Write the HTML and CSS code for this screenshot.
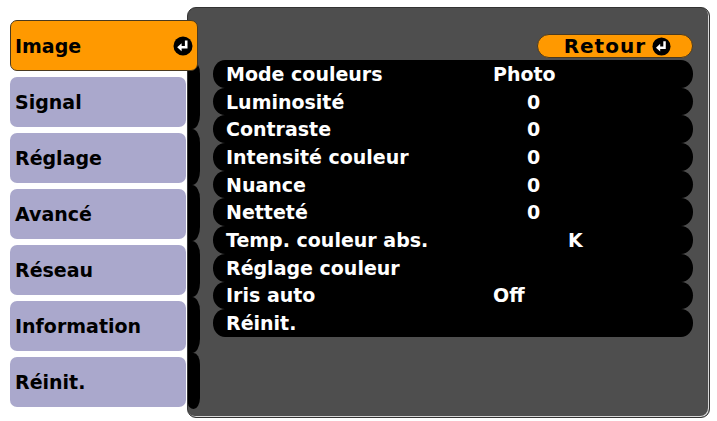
FILE: index.html
```html
<!DOCTYPE html>
<html lang="fr">
<head>
  <meta charset="UTF-8" />
  <meta name="viewport" content="width=device-width, initial-scale=1.0"/>
  <title>Menu projecteur - Image</title>
  <link rel="stylesheet" href="styles.css">
</head>
<body>

  <div class="screen">
    <nav class="menu">
      <div class="tab active">
        <span>Image</span>
        <svg class="enter" viewBox="0 0 20 20" width="20" height="20">
          <circle cx="10" cy="10" r="9.5" fill="#000"/>
          <path d="M13.2 4.6 V11.2 H8" fill="none" stroke="#fff" stroke-width="2.6"/>
          <path d="M4.2 11.2 L8.6 7.2 V15.2 Z" fill="#fff"/>
        </svg>
      </div>
      <div class="tab">Signal</div>
      <div class="tab">Réglage</div>
      <div class="tab">Avancé</div>
      <div class="tab">Réseau</div>
      <div class="tab">Information</div>
      <div class="tab">Réinit.</div>
    </nav>

    <section class="panel">
      <div class="rail">
        <div class="seg first"></div>
        <div class="seg"></div>
        <div class="seg"></div>
        <div class="seg"></div>
        <div class="seg"></div>
        <div class="seg last"></div>
      </div>

      <div class="content">
        <div class="back">
          <span>Retour</span>
          <svg class="enter" viewBox="0 0 20 20" width="19" height="19">
            <circle cx="10" cy="10" r="9.5" fill="#000"/>
            <path d="M13.2 4.6 V11.2 H8" fill="none" stroke="#fff" stroke-width="2.6"/>
            <path d="M4.2 11.2 L8.6 7.2 V15.2 Z" fill="#fff"/>
          </svg>
        </div>

        <ul class="settings">
          <li><span class="label">Mode couleurs</span><span class="value">Photo</span></li>
          <li><span class="label">Luminosité</span><span class="value num">0</span></li>
          <li><span class="label">Contraste</span><span class="value num">0</span></li>
          <li><span class="label">Intensité couleur</span><span class="value num">0</span></li>
          <li><span class="label">Nuance</span><span class="value num">0</span></li>
          <li><span class="label">Netteté</span><span class="value num">0</span></li>
          <li><span class="label">Temp. couleur abs.</span><span class="value unit">K</span></li>
          <li><span class="label">Réglage couleur</span><span class="value"></span></li>
          <li><span class="label">Iris auto</span><span class="value">Off</span></li>
          <li><span class="label">Réinit.</span><span class="value"></span></li>
        </ul>
      </div>
    </section>
  </div>

</body>
</html>
```

FILE: styles.css
```css
body {
  margin: 0;
  padding: 0;
  background: #fff;
  font-family: 'DejaVu Sans', Verdana, sans-serif;
  font-weight: bold;
  font-size: 19px;
}

.screen {
  display: flex;
  align-items: flex-start;
  padding: 7px 0 0 10px;
  height: 414px;
}

/* left tabs */
.menu {
  width: 176px;
  padding-top: 13px;
  display: flex;
  flex-direction: column;
  gap: 6px;
}

.tab {
  height: 50px;
  display: flex;
  align-items: center;
  justify-content: space-between;
  padding: 0 5px;
  background: #aaa8cc;
  color: #000;
  border-radius: 7px;
  box-sizing: border-box;
}

.tab.active {
  position: relative;
  z-index: 1;
  height: 51px;
  margin-right: -12px;
  background: #ff9900;
  border: 1px solid #4a3a20;
  padding: 0 4px 0 4px;
}

.enter {
  display: block;
  flex: none;
}

/* dark panel */
.panel {
  margin-left: 1px;
  width: 523px;
  height: 411px;
  box-sizing: border-box;
  display: flex;
  background: #4e4e4e;
  border: 1px solid #333;
  border-radius: 9px;
  box-shadow: inset -1px -1px 0 #d8d8d8;
}

.rail {
  width: 12px;
  margin-top: 52px;
  display: flex;
  flex-direction: column;
}

.seg {
  height: 56px;
  background: #000;
  border-radius: 0 8px 8px 0 / 0 14px 14px 0;
}

.seg.first {
  height: 69px;
}

.seg.last {
  border-bottom-left-radius: 7px;
}

.content {
  width: 480px;
  margin-left: 13px;
  padding-top: 26px;
  display: flex;
  flex-direction: column;
}

.back {
  align-self: flex-end;
  width: 156px;
  height: 24px;
  box-sizing: border-box;
  margin-bottom: 2px;
  display: flex;
  align-items: center;
  justify-content: flex-end;
  gap: 6px;
  padding-right: 21px;
  background: #ff9900;
  border: 1px solid #4a3a20;
  border-radius: 12px;
  font-size: 20px;
  letter-spacing: 1px;
}

.settings {
  list-style: none;
  margin: 0;
  padding: 0;
}

.settings li {
  height: 27.7px;
  display: flex;
  align-items: center;
  background: #000;
  color: #fff;
  border-radius: 12px / 13.8px;
  padding-left: 13px;
}

.label {
  width: 267px;
  white-space: nowrap;
}

.num {
  padding-left: 34px;
}

.unit {
  padding-left: 75px;
}
```
